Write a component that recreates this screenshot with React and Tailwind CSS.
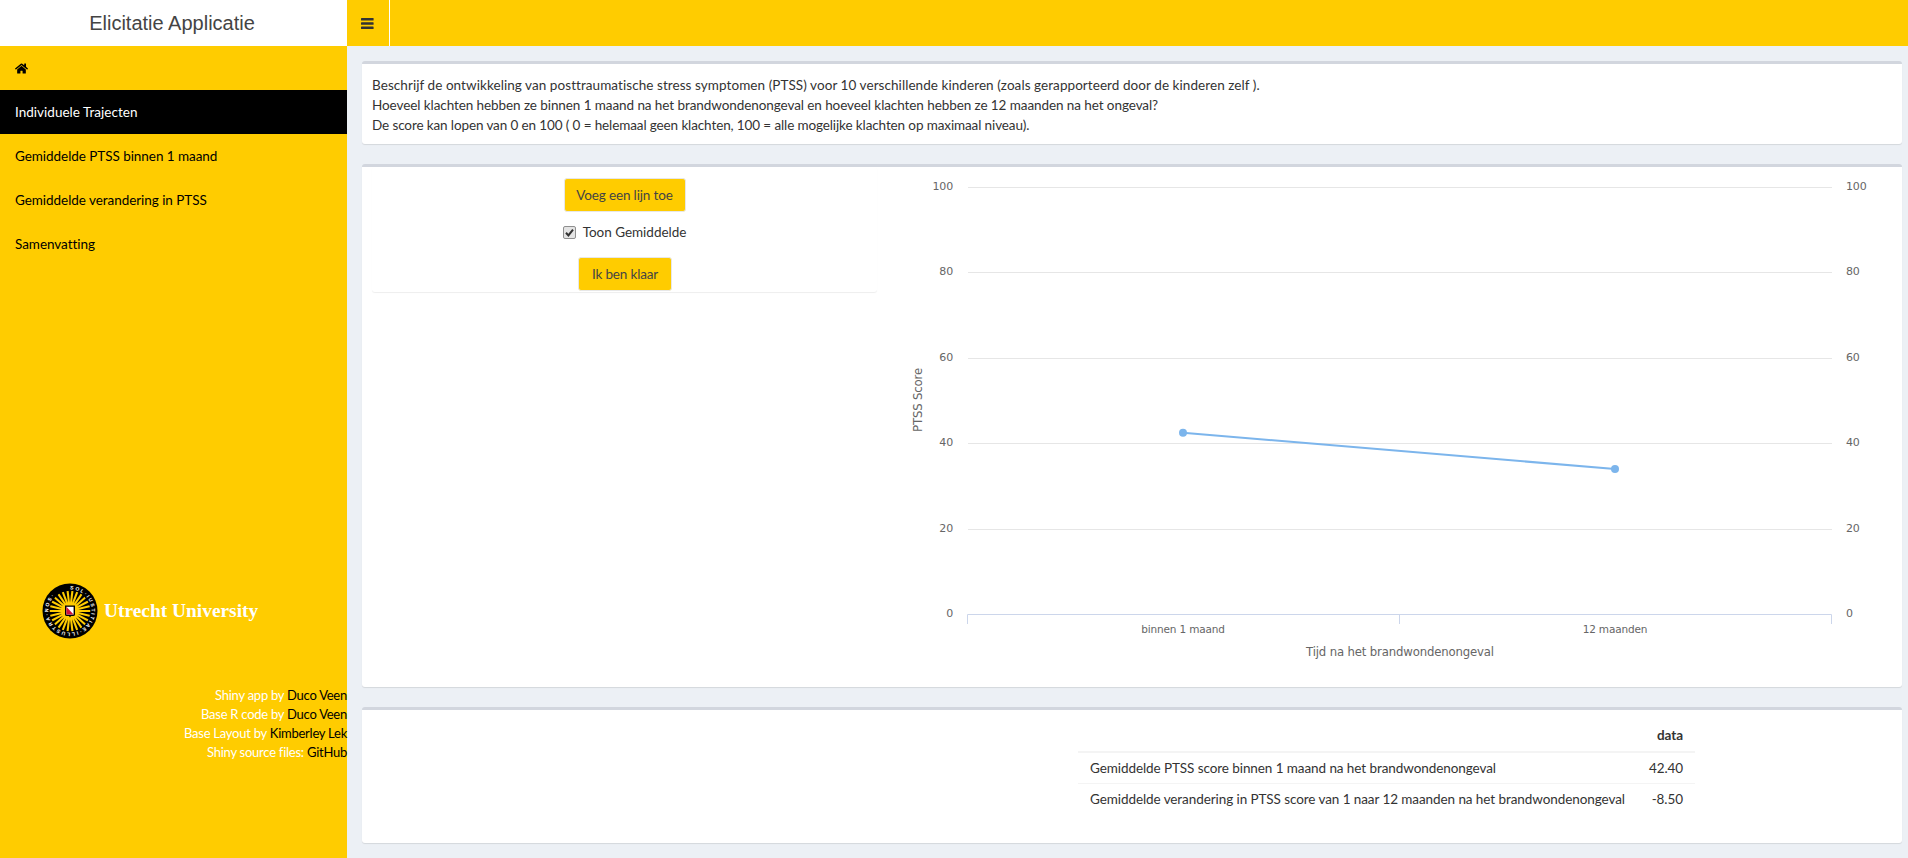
import React from "react";
import { FaHome } from "react-icons/fa";

const yTicks = [
  [100, 187.5],
  [80, 272.5],
  [60, 358.5],
  [40, 443.5],
  [20, 529.5],
  [0, 614.5],
];

function Logo() {
  const wedges = Array.from({ length: 26 }, (_, i) => (i * 360) / 26);
  return (
    <svg width="56" height="56" viewBox="-28 -28 56 56" className="ml-[1px] block shrink-0">
      <circle r="27.5" fill="#000" />
      <circle r="20.3" fill="#ffcc00" />
      <defs>
        <path id="ring" d="M 0 -21.6 A 21.6 21.6 0 1 1 0 21.6 A 21.6 21.6 0 1 1 0 -21.6" />
      </defs>
      {wedges.map((a) => (
        <polygon key={a} points="-1.5,-21 1.5,-21 0,-8.5" fill="#000" transform={`rotate(${a})`} />
      ))}
      <text fontSize="5" fontWeight="700" fill="#fff" fontFamily="'Liberation Sans',sans-serif" letterSpacing="1.55">
        <textPath href="#ring">SOL·IUSTITIAE·ILLUSTRA·NOS·</textPath>
      </text>
      <path d="M-5 -5.5H5V3.5Q5 5 3 5H1L0 6.5L-1 5H-3Q-5 5 -5 3.5Z" fill="#000" />
      <path d="M-3.6 -4.2H3.6V3.6H-3.6Z" fill="#fff" />
      <path d="M-3.6 -4.2L3.6 3.6H-3.6Z" fill="#d0103a" />
    </svg>
  );
}

function Chart() {
  return (
    <svg width="1025" height="520" viewBox="877 167 1025 520" className="block shrink-0" fontFamily="'DejaVu Sans',sans-serif" fontSize="11" fill="#666666">
      {yTicks.slice(0, 5).map(([v, y]) => (
        <line key={v} x1="968" x2="1832" y1={y} y2={y} stroke="#e6e6e6" strokeWidth="1" />
      ))}
      {yTicks.map(([v, y]) => (
        <React.Fragment key={v}>
          <text x="953" y={y + 2.5} textAnchor="end">{v}</text>
          <text x="1846" y={y + 2.5}>{v}</text>
        </React.Fragment>
      ))}
      <path d="M967.5 624V614.5H1831.5V624M1399.5 614.5V624" fill="none" stroke="#ccd6eb" strokeWidth="1" />
      <path d="M1183 432.8L1615 469" fill="none" stroke="#7cb5ec" strokeWidth="2" />
      <circle cx="1183" cy="432.8" r="4" fill="#7cb5ec" />
      <circle cx="1615" cy="469" r="4" fill="#7cb5ec" />
      <text x="1183" y="633" textAnchor="middle" fontSize="10.5">binnen 1 maand</text>
      <text x="1615" y="633" textAnchor="middle" fontSize="10.5">12 maanden</text>
      <text x="1400" y="656" textAnchor="middle" fontSize="11.7">Tijd na het brandwondenongeval</text>
      <text x="0" y="0" textAnchor="middle" fontSize="11.7" transform="translate(922 400) rotate(-90)">PTSS Score</text>
    </svg>
  );
}

const navItems = ["Gemiddelde PTSS binnen 1 maand", "Gemiddelde verandering in PTSS", "Samenvatting"];

function Btn({ children, className }) {
  return (
    <button className={`h-[34px] whitespace-nowrap rounded-[3px] border border-[#e7e7e7] bg-[#ffcc00] text-[#444] ${className}`}>
      {children}
    </button>
  );
}

function Credit({ label, name }) {
  return (
    <div className="h-[19px] leading-[19px] text-white">
      {label} <span className="text-black">{name}</span>
    </div>
  );
}

export default function App() {
  return (
    <div className="flex h-[858px] w-[1908px] flex-col overflow-hidden bg-[#ecf0f5] font-['Lato','Noto_Sans',sans-serif] text-[13.5px] tracking-[-0.15px] text-[#333]">
      <header className="flex h-[46px] shrink-0">
        <div className="flex w-[347px] items-center justify-center bg-white pr-[3px] font-['Liberation_Sans',Arial,sans-serif] text-[20px] tracking-normal text-[#444]">
          Elicitatie Applicatie
        </div>
        <div className="flex flex-1 bg-[#ffcc00]">
          <div className="flex w-[43px] items-center justify-center border-r border-white">
            <svg width="13" height="11" viewBox="0 0 13 11" className="ml-[-1px] block" fill="#333">
              <rect x="0" y="0" width="12.6" height="2.6" rx="0.6" />
              <rect x="0" y="4.2" width="12.6" height="2.6" rx="0.6" />
              <rect x="0" y="8.4" width="12.6" height="2.6" rx="0.6" />
            </svg>
          </div>
        </div>
      </header>
      <div className="flex min-h-0 flex-1">
        <aside className="flex w-[347px] shrink-0 flex-col bg-[#ffcc00] tracking-[-0.05px] text-black">
          <div className="flex h-[44px] items-center pl-[15px]">
            <FaHome className="h-[13px] w-[13px]" />
          </div>
          <div className="flex h-[44px] items-center bg-black pl-[15px] tracking-[0.02px] text-white">Individuele Trajecten</div>
          {navItems.map((t) => (
            <div key={t} className="flex h-[44px] items-center pl-[15px]">{t}</div>
          ))}
          <div className="mt-[317px] flex items-center pl-[41px]">
            <Logo />
            <span className="ml-[6px] font-['Liberation_Serif',serif] text-[19.4px] font-bold tracking-normal text-white">Utrecht University</span>
          </div>
          <div className="mt-[47px] text-right text-[13px] tracking-[-0.25px]">
            <Credit label="Shiny app by" name="Duco Veen" />
            <Credit label="Base R code by" name="Duco Veen" />
            <Credit label="Base Layout by" name="Kimberley Lek" />
            <Credit label="Shiny source files:" name="GitHub" />
          </div>
        </aside>
        <main className="flex min-w-0 flex-1 flex-col gap-5 pb-[15px] pl-[15px] pr-[6px] pt-[15px]">
          <section className="h-[83px] rounded-[3px] border-t-[3px] border-[#d2d6de] bg-white pl-[10px] pt-[11px] leading-[20px] shadow-[0_1px_1px_rgba(0,0,0,0.1)]">
            <p className="tracking-[0.065px]">Beschrijf de ontwikkeling van posttraumatische stress symptomen (PTSS) voor 10 verschillende kinderen (zoals gerapporteerd door de kinderen zelf ).</p>
            <p className="tracking-[-0.08px]">Hoeveel klachten hebben ze binnen 1 maand na het brandwondenongeval en hoeveel klachten hebben ze 12 maanden na het ongeval?</p>
            <p className="tracking-[-0.115px]">De score kan lopen van 0 en 100 ( 0 = helemaal geen klachten, 100 = alle mogelijke klachten op maximaal niveau).</p>
          </section>
          <section className="flex h-[523px] items-start rounded-[3px] border-t-[3px] border-[#d2d6de] bg-white pl-[10px] shadow-[0_1px_1px_rgba(0,0,0,0.1)]">
            <div className="flex h-[125px] w-[505px] shrink-0 flex-col items-center rounded-[3px] pt-[11px] shadow-[0_1px_1px_rgba(0,0,0,0.07)]">
              <Btn className="w-[122px]">Voeg een lijn toe</Btn>
              <label className="mt-[10px] flex h-[20px] items-center gap-[7px] tracking-[-0.02px]">
                <span className="relative block h-[13px] w-[13px]">
                  <input type="checkbox" defaultChecked className="m-0 block h-[13px] w-[13px] appearance-none rounded-[2px] border border-[#8f8f8f] bg-[#e4e4e4]" />
                  <svg viewBox="0 0 13 13" className="pointer-events-none absolute inset-0 h-[13px] w-[13px]">
                    <path d="M3 6.8L5.4 9.4L10 3.6" fill="none" stroke="#333" strokeWidth="2" />
                  </svg>
                </span>
                <span className="text-[#333]">Toon Gemiddelde</span>
              </label>
              <Btn className="ml-[1px] mt-[15px] w-[94px]">Ik ben klaar</Btn>
            </div>
            <Chart />
          </section>
          <section className="h-[136px] rounded-[3px] border-t-[3px] border-[#d2d6de] bg-white pl-[716px] pt-[9px] tracking-[-0.08px] shadow-[0_1px_1px_rgba(0,0,0,0.1)]">
            <table className="w-[615px] border-collapse whitespace-nowrap">
              <thead>
                <tr className="h-[33px] border-b-2 border-[#f4f4f4]">
                  <th className="px-[12px]" />
                  <th className="px-[12px] text-right font-bold">data</th>
                </tr>
              </thead>
              <tbody>
                <tr className="h-[31px] border-b border-[#f4f4f4]">
                  <td className="px-[12px]">Gemiddelde PTSS score binnen 1 maand na het brandwondenongeval</td>
                  <td className="px-[12px] text-right">42.40</td>
                </tr>
                <tr className="h-[31px]">
                  <td className="px-[12px]">Gemiddelde verandering in PTSS score van 1 naar 12 maanden na het brandwondenongeval</td>
                  <td className="px-[12px] text-right">-8.50</td>
                </tr>
              </tbody>
            </table>
          </section>
        </main>
      </div>
    </div>
  );
}
